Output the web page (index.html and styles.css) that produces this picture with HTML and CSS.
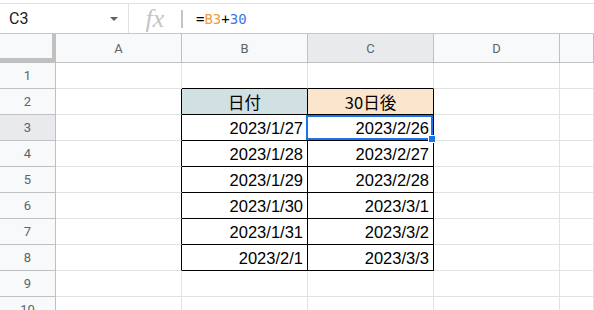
FILE: index.html
```html
<!DOCTYPE html>
<html lang="ja">
<head>
    <meta charset="UTF-8">
    <title>日付 +30</title>
    <link rel="stylesheet" href="styles.css">
</head>
<body>

    <div class="formula-bar">
        <div class="name-box">
            <span class="name">C3</span>
            <span class="caret"></span>
        </div>
        <div class="fx">fx</div>
        <div class="bar-sep"></div>
        <div class="formula">=<span class="ref">B3</span>+<span class="num">30</span></div>
    </div>

    <div class="sheet">
        <!-- заголовки колонок -->
        <div class="corner"></div>
        <div class="col-head">A</div>
        <div class="col-head">B</div>
        <div class="col-head active">C</div>
        <div class="col-head">D</div>
        <div class="col-head"></div>

        <div class="row-head">1</div>
        <div class="cell"></div>
        <div class="cell tb-bottom"></div>
        <div class="cell tb-bottom"></div>
        <div class="cell"></div>
        <div class="cell"></div>

        <div class="row-head">2</div>
        <div class="cell tb-right"></div>
        <div class="cell tb-right tb-bottom head-blue">日付</div>
        <div class="cell tb-right tb-bottom head-orange">30日後</div>
        <div class="cell"></div>
        <div class="cell"></div>

        <div class="row-head active">3</div>
        <div class="cell tb-right"></div>
        <div class="cell tb-right tb-bottom">2023/1/27</div>
        <div class="cell tb-right tb-bottom selected">2023/2/26<div class="selection"><span class="handle"></span></div></div>
        <div class="cell"></div>
        <div class="cell"></div>

        <div class="row-head">4</div>
        <div class="cell tb-right"></div>
        <div class="cell tb-right tb-bottom">2023/1/28</div>
        <div class="cell tb-right tb-bottom">2023/2/27</div>
        <div class="cell"></div>
        <div class="cell"></div>

        <div class="row-head">5</div>
        <div class="cell tb-right"></div>
        <div class="cell tb-right tb-bottom">2023/1/29</div>
        <div class="cell tb-right tb-bottom">2023/2/28</div>
        <div class="cell"></div>
        <div class="cell"></div>

        <div class="row-head">6</div>
        <div class="cell tb-right"></div>
        <div class="cell tb-right tb-bottom">2023/1/30</div>
        <div class="cell tb-right tb-bottom">2023/3/1</div>
        <div class="cell"></div>
        <div class="cell"></div>

        <div class="row-head">7</div>
        <div class="cell tb-right"></div>
        <div class="cell tb-right tb-bottom">2023/1/31</div>
        <div class="cell tb-right tb-bottom">2023/3/2</div>
        <div class="cell"></div>
        <div class="cell"></div>

        <div class="row-head">8</div>
        <div class="cell tb-right"></div>
        <div class="cell tb-right tb-bottom">2023/2/1</div>
        <div class="cell tb-right tb-bottom">2023/3/3</div>
        <div class="cell"></div>
        <div class="cell"></div>

        <div class="row-head">9</div>
        <div class="cell"></div>
        <div class="cell"></div>
        <div class="cell"></div>
        <div class="cell"></div>
        <div class="cell"></div>

        <div class="row-head">10</div>
        <div class="cell"></div>
        <div class="cell"></div>
        <div class="cell"></div>
        <div class="cell"></div>
        <div class="cell"></div>
    </div>

</body>
</html>
```

FILE: styles.css
```css
html, body {
    margin: 0;
    overflow: hidden;
    background: #fff;
    font-family: "Liberation Sans", Arial, "Noto Sans CJK JP", sans-serif;
}

/* рядок формул */
.formula-bar {
    display: flex;
    align-items: center;
    height: 29px;
    margin-top: 3px;
    border-top: 1px solid #e1e1e1;
    border-bottom: 1px solid #c7c7c7;
}
.name-box {
    display: flex;
    align-items: center;
    box-sizing: border-box;
    width: 129px;
    height: 100%;
    padding: 0 10px 0 9px;
    border-right: 1px solid #e1e1e1;
    font-family: Roboto, sans-serif;
    font-size: 16px;
    color: #202124;
}
.name-box .name {
    flex: 1;
}
.caret {
    width: 0;
    height: 0;
    border-left: 4px solid transparent;
    border-right: 4px solid transparent;
    border-top: 4px solid #5f6368;
}
.fx {
    width: 52px;
    text-align: center;
    font-family: "Liberation Serif", serif;
    font-style: italic;
    font-size: 26px;
    line-height: 29px;
    color: #c4c4c4;
}
.bar-sep {
    width: 2px;
    height: 18px;
    background: #c4c4c4;
}
.formula {
    padding-left: 13px;
    font-family: "DejaVu Sans Mono", monospace;
    font-size: 14px;
    color: #000;
}
.formula .ref {
    color: #f49a3b;
}
.formula .num {
    color: #3b78e7;
}

/* сітка таблиці */
.sheet {
    display: grid;
    grid-template-columns: 56px repeat(4, 126px) 1fr;
    grid-template-rows: 29px repeat(10, 26px);
}
.corner {
    box-sizing: border-box;
    background: #f8f9fa;
    border-right: 4px solid #c0c0c0;
    border-bottom: 5px solid #c0c0c0;
}
.col-head,
.row-head {
    display: flex;
    align-items: center;
    justify-content: center;
    box-sizing: border-box;
    background: #f8f9fa;
    border-right: 1px solid #c0c0c0;
    border-bottom: 1px solid #c0c0c0;
    font-family: Roboto, sans-serif;
    font-size: 13px;
    color: #5f6368;
}
.col-head.active,
.row-head.active {
    background: #e8eaed;
}
.cell {
    box-sizing: border-box;
    border-right: 1px solid #e2e2e2;
    border-bottom: 1px solid #e2e2e2;
    padding: 2px 4px 0;
    font-size: 16.5px;
    line-height: 23px;
    text-align: right;
    white-space: nowrap;
    color: #000;
}
.tb-right {
    border-right-color: #000;
}
.tb-bottom {
    border-bottom-color: #000;
}
.head-blue,
.head-orange {
    text-align: center;
    font-family: "Noto Sans CJK JP", sans-serif;
    line-height: 22px;
}
.head-blue {
    background: #d0e0e3;
}
.head-orange {
    background: #fce5cd;
}

/* виділена комірка C3 */
.selected {
    position: relative;
}
.selection {
    position: absolute;
    top: 0;
    left: -2px;
    right: 0;
    bottom: 0;
    border: 2px solid #1a73e8;
}
.handle {
    position: absolute;
    right: -5px;
    bottom: -5px;
    width: 6px;
    height: 6px;
    background: #1a73e8;
    border: 1px solid #fff;
}
```
